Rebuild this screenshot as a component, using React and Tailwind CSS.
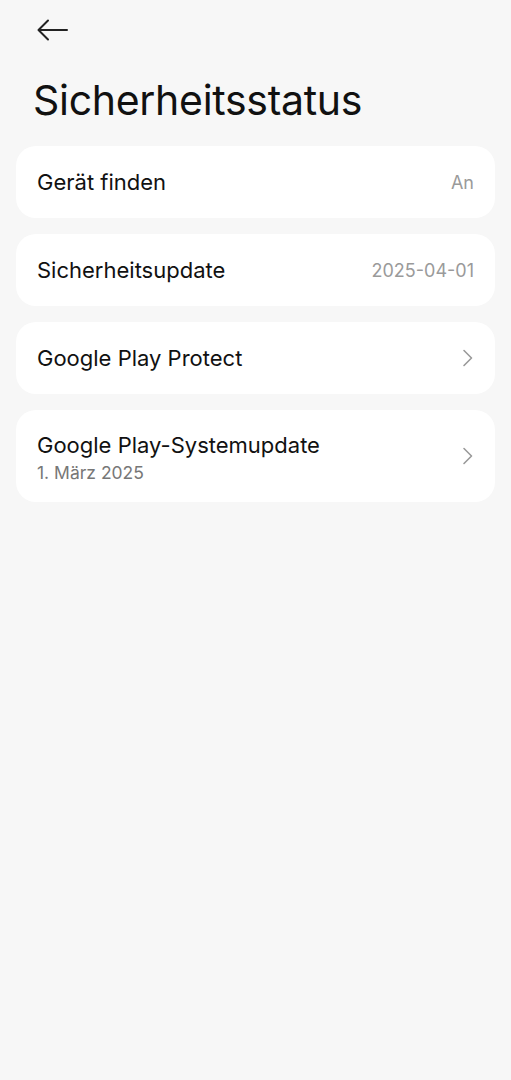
import React from "react";

const rows = [
  { title: "Gerät finden", value: "An" },
  { title: "Sicherheitsupdate", value: "2025-04-01" },
  { title: "Google Play Protect", chevron: true },
  { title: "Google Play-Systemupdate", sub: "1. März 2025", chevron: true },
];

function Chevron() {
  return (
    <svg width="12" height="18" viewBox="0 0 12 18" fill="none">
      <path d="M2 1.5 L9.5 9 L2 16.5" stroke="#9a9a9a" strokeWidth="1.6" strokeLinecap="round" strokeLinejoin="round" />
    </svg>
  );
}

export default function App() {
  return (
    <div className="min-h-[1080px] w-full bg-[#f7f7f7] font-['Inter','Noto_Sans',sans-serif] text-[#111]">
      {/* top bar */}
      <div className="h-[60px] flex items-center pl-[37px]">
        <svg width="31" height="22" viewBox="0 0 31 22" fill="none">
          <path d="M30 11 H2 M11 1.5 L1.5 11 L11 20.5" stroke="#222" strokeWidth="2" strokeLinecap="round" strokeLinejoin="round" />
        </svg>
      </div>

      <h1 className="pl-[33px] pt-[14px] text-[41px] leading-[52px] font-normal tracking-[-0.3px]">
        Sicherheitsstatus
      </h1>

      <div className="mt-[20px] px-4 flex flex-col gap-4">
        {rows.map((row, i) => (
          <div
            key={i}
            className={`bg-white rounded-[20px] flex items-center justify-between pl-[21px] pr-[21px] ${row.sub ? "h-[92px]" : "h-[72px]"}`}
          >
            <div className={`flex flex-col ${row.sub ? "pt-[4px]" : ""}`}>
              <span className="text-[22px] leading-[29px]">{row.title}</span>
              {row.sub && <span className="text-[17.5px] leading-[26px] text-[#777]">{row.sub}</span>}
            </div>
            {row.value && <span className="text-[18px] text-[#9a9a9a]">{row.value}</span>}
            {row.chevron && <Chevron />}
          </div>
        ))}
      </div>
    </div>
  );
}
